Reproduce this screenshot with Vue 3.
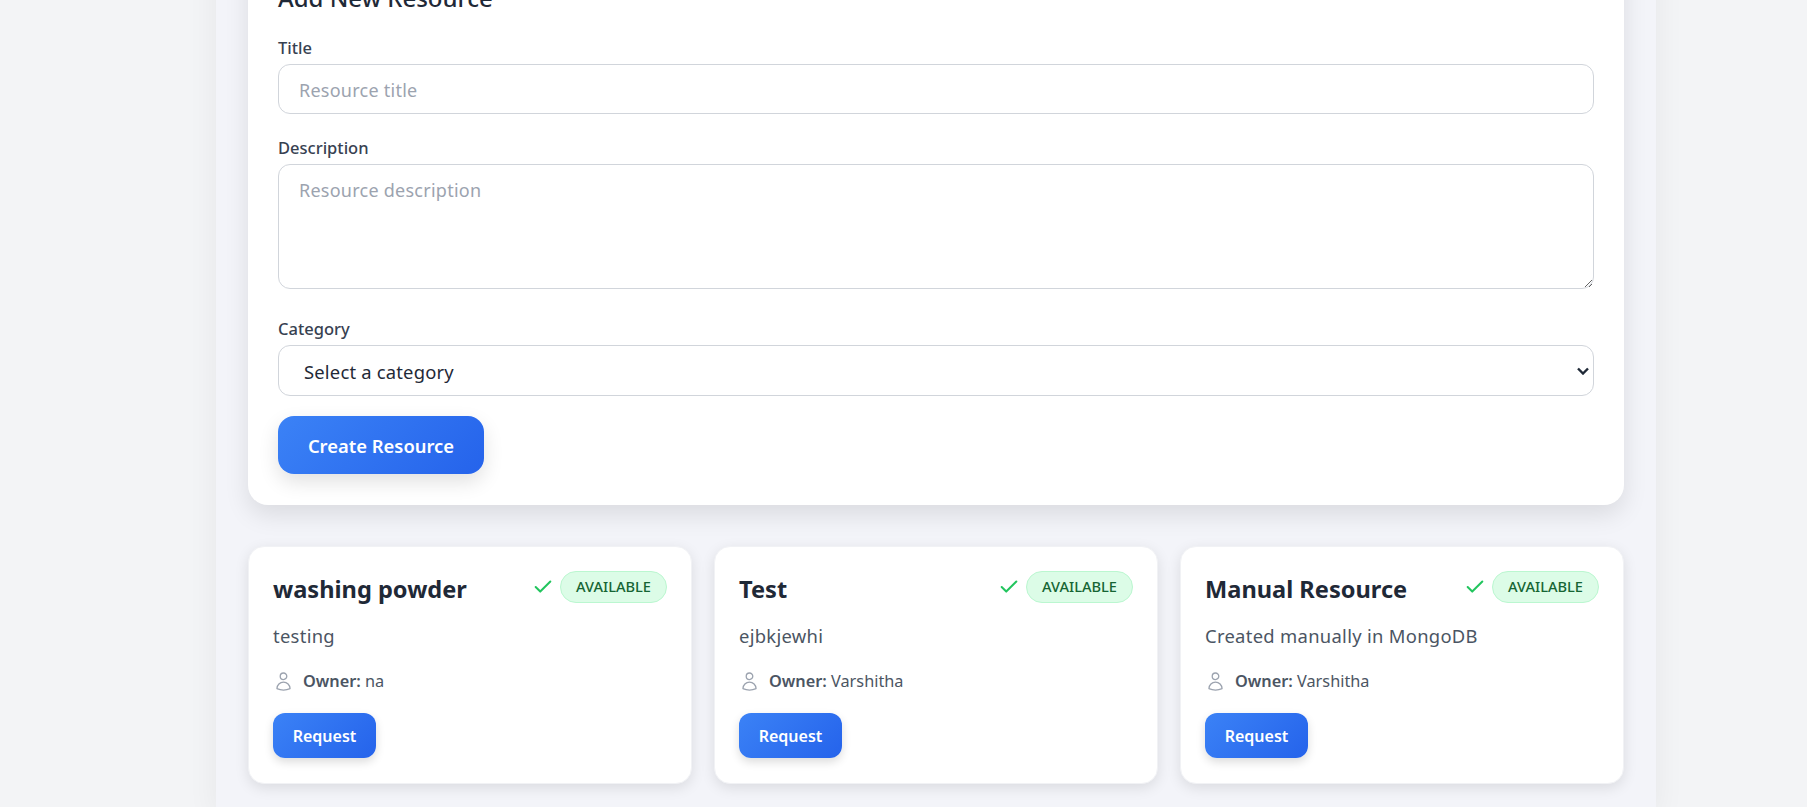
<template>
  <div class="page">
    <main class="container">
      <section class="form-card">
        <h2 class="form-title">Add New Resource</h2>
        <div class="field">
          <label class="field-label">Title</label>
          <input class="field-input" type="text" placeholder="Resource title" />
        </div>
        <div class="field">
          <label class="field-label">Description</label>
          <textarea class="field-input field-textarea" placeholder="Resource description"></textarea>
        </div>
        <div class="field">
          <label class="field-label">Category</label>
          <div class="select-wrap">
            <select class="field-input field-select">
              <option>Select a category</option>
            </select>
            <svg class="select-arrow" viewBox="0 0 12 8" fill="none" stroke="currentColor" stroke-width="2.4">
              <path d="M1 1.5l5 5 5-5" />
            </svg>
          </div>
        </div>
        <button class="btn btn-create" type="button">Create Resource</button>
      </section>

      <section class="resource-grid">
        <article v-for="item in resources" :key="item.title" class="resource-card">
          <div class="resource-head">
            <h3 class="resource-title">{{ item.title }}</h3>
            <div class="resource-status">
              <svg class="check-icon" viewBox="0 0 24 24" fill="none" stroke="currentColor" stroke-width="2.2" stroke-linecap="round" stroke-linejoin="round">
                <path d="M20 6L9 17l-5-5" />
              </svg>
              <span class="badge">AVAILABLE</span>
            </div>
          </div>
          <p class="resource-desc">{{ item.description }}</p>
          <div class="resource-owner">
            <svg class="owner-icon" viewBox="0 0 24 24" fill="none" stroke="currentColor" stroke-width="1.5" stroke-linecap="round" stroke-linejoin="round">
              <path d="M15.75 6a3.75 3.75 0 1 1-7.5 0 3.75 3.75 0 0 1 7.5 0ZM4.501 20.118a7.5 7.5 0 0 1 14.998 0A17.933 17.933 0 0 1 12 21.75c-2.676 0-5.216-.584-7.499-1.632Z" />
            </svg>
            <span><strong class="owner-label">Owner:</strong> {{ item.owner }}</span>
          </div>
          <button class="btn btn-request" type="button">Request</button>
        </article>
      </section>
    </main>
  </div>
</template>

<script setup>
const resources = [
  { title: 'washing powder', description: 'testing', owner: 'na' },
  { title: 'Test', description: 'ejbkjewhi', owner: 'Varshitha' },
  { title: 'Manual Resource', description: 'Created manually in MongoDB', owner: 'Varshitha' },
]
</script>

<style>
html, body { margin: 0; height: 807px; overflow: hidden; background: #f3f4f6; }
</style>

<style scoped>
.page {
  height: 807px;
  overflow: hidden;
  font-family: "Noto Sans", "Open Sans", sans-serif;
  color: #1f2937;
  line-height: 1.6;
}
.container {
  width: 1440px;
  box-sizing: border-box;
  margin: -52px 0 0 216px;
  padding: 0 32px 32px;
  background: #f3f4f9;
  box-shadow: 0 0 30px rgba(0, 0, 0, 0.06);
}
.form-card {
  background: #fff;
  border-radius: 20px;
  padding: 31px 30px;
  box-shadow: 0 10px 25px rgba(0, 0, 0, 0.1);
}
.form-title {
  margin: 0 0 17px;
  font-size: 24px;
  font-weight: 500;
  line-height: 38px;
  color: #1f2937;
}
.field { margin-bottom: 20px; }
.field-label {
  display: block;
  margin-bottom: 3px;
  padding-top: 1px;
  font-size: 16.5px;
  font-weight: 500;
  line-height: 26px;
  color: #374151;
}
.field-input {
  display: block;
  width: 100%;
  box-sizing: border-box;
  height: 50px;
  padding: 11px 20px 9px;
  border: 1px solid #d1d5db;
  border-radius: 12px;
  background: #fff;
  font-family: inherit;
  font-size: 18px;
  letter-spacing: 0.25px;
  color: #1f2937;
}
.field-input::placeholder { color: #9ca3af; }
.field-textarea {
  height: 125px;
  margin-bottom: 26px;
  padding-top: 12.5px;
  resize: vertical;
}
.select-wrap { position: relative; }
.field-select {
  height: 51px;
  padding-left: 25px;
  appearance: none;
  font-size: 18.4px;
  letter-spacing: 0.2px;
}
.select-arrow {
  position: absolute;
  right: 5px;
  top: 22px;
  width: 12px;
  height: 8px;
  color: #1f2937;
}
.btn {
  display: block;
  border: none;
  color: #fff;
  font-family: inherit;
  font-weight: 600;
  background: linear-gradient(135deg, #3b82f6, #2563eb);
}
.btn-create {
  width: 206px;
  height: 58px;
  border-radius: 16px;
  font-size: 18.4px;
  box-shadow: 0 8px 20px rgba(0, 0, 0, 0.12);
}
.resource-grid {
  display: grid;
  grid-template-columns: repeat(3, 1fr);
  gap: 22px;
  margin-top: 41px;
}
.resource-card {
  box-sizing: border-box;
  height: 238px;
  padding: 24px;
  border: 1px solid #f1f2f5;
  border-radius: 16px;
  background: #fff;
  box-shadow: 0 4px 14px rgba(0, 0, 0, 0.1);
}
.resource-head {
  display: flex;
  justify-content: space-between;
  align-items: flex-start;
}
.resource-title {
  margin: 0;
  font-size: 23.6px;
  font-weight: 700;
  line-height: 37px;
  color: #1f2937;
}
.resource-status {
  display: flex;
  align-items: center;
  gap: 6px;
}
.check-icon { width: 22px; height: 22px; color: #22c55e; }
.badge {
  box-sizing: border-box;
  height: 32px;
  padding: 0 15px;
  display: flex;
  align-items: center;
  border: 1px solid #bbf7d0;
  border-radius: 16px;
  background: #dcfce7;
  color: #166534;
  font-size: 14.6px;
  font-weight: 500;
}
.resource-desc {
  margin: 13px 0 0;
  font-size: 18.4px;
  letter-spacing: 0.3px;
  line-height: 29px;
  color: #4b5563;
}
.resource-owner {
  display: flex;
  align-items: center;
  gap: 9px;
  margin-top: 18px;
  font-size: 16.3px;
  line-height: 27px;
  color: #4b5563;
}
.owner-icon { width: 21px; height: 21px; color: #9ca3af; flex: none; }
.owner-label { font-weight: 600; }
.btn-request {
  width: 103px;
  height: 45px;
  margin-top: 18px;
  border-radius: 12px;
  font-size: 16px;
  box-shadow: 0 4px 10px rgba(0, 0, 0, 0.14);
}
</style>
